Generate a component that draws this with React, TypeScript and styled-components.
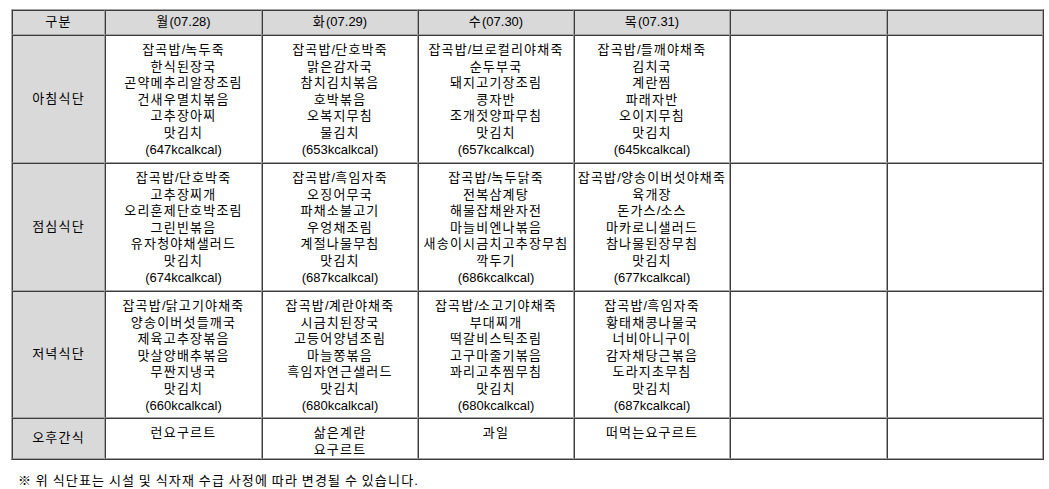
import React from "react";
import styled, { createGlobalStyle } from "styled-components";

const days = ["월(07.28)", "화(07.29)", "수(07.30)", "목(07.31)", "", ""];

const meals: { label: string; height: number; menus: string[][] }[] = [
  {
    label: "아침식단",
    height: 128,
    menus: [
      ["잡곡밥/녹두죽", "한식된장국", "곤약메추리알장조림", "건새우멸치볶음", "고추장아찌", "맛김치", "(647kcalkcal)"],
      ["잡곡밥/단호박죽", "맑은감자국", "참치김치볶음", "호박볶음", "오복지무침", "물김치", "(653kcalkcal)"],
      ["잡곡밥/브로컬리야채죽", "순두부국", "돼지고기장조림", "콩자반", "조개젓양파무침", "맛김치", "(657kcalkcal)"],
      ["잡곡밥/들깨야채죽", "김치국", "계란찜", "파래자반", "오이지무침", "맛김치", "(645kcalkcal)"],
      [],
      [],
    ],
  },
  {
    label: "점심식단",
    height: 128,
    menus: [
      ["잡곡밥/단호박죽", "고추장찌개", "오리훈제단호박조림", "그린빈볶음", "유자청야채샐러드", "맛김치", "(674kcalkcal)"],
      ["잡곡밥/흑임자죽", "오징어무국", "파채소불고기", "우엉채조림", "계절나물무침", "맛김치", "(687kcalkcal)"],
      ["잡곡밥/녹두닭죽", "전복삼계탕", "해물잡채완자전", "마늘비엔나볶음", "새송이시금치고추장무침", "깍두기", "(686kcalkcal)"],
      ["잡곡밥/양송이버섯야채죽", "육개장", "돈가스/소스", "마카로니샐러드", "참나물된장무침", "맛김치", "(677kcalkcal)"],
      [],
      [],
    ],
  },
  {
    label: "저녁식단",
    height: 127,
    menus: [
      ["잡곡밥/닭고기야채죽", "양송이버섯들깨국", "제육고추장볶음", "맛살양배추볶음", "무짠지냉국", "맛김치", "(660kcalkcal)"],
      ["잡곡밥/계란야채죽", "시금치된장국", "고등어양념조림", "마늘쫑볶음", "흑임자연근샐러드", "맛김치", "(680kcalkcal)"],
      ["잡곡밥/소고기야채죽", "부대찌개", "떡갈비스틱조림", "고구마줄기볶음", "꽈리고추찜무침", "맛김치", "(680kcalkcal)"],
      ["잡곡밥/흑임자죽", "황태채콩나물국", "너비아니구이", "감자채당근볶음", "도라지초무침", "맛김치", "(687kcalkcal)"],
      [],
      [],
    ],
  },
  {
    label: "오후간식",
    height: 40,
    menus: [["런요구르트"], ["삶은계란", "요구르트"], ["과일"], ["떠먹는요구르트"], [], []],
  },
];

const colWidths = [93, 157, 156, 156, 156, 157, 156];

// hangul runs get a little extra tracking, like the old bitmap font
function Txt({ children }: { children: string }) {
  const parts = children.split(/([가-힣※]+)/).filter((p) => p !== "");
  return (
    <>
      {parts.map((p, i) =>
        /[가-힣※]/.test(p) ? <Hangul key={i}>{p}</Hangul> : <React.Fragment key={i}>{p}</React.Fragment>
      )}
    </>
  );
}

function App() {
  return (
    <Page>
      <GlobalStyle />
      <MenuTable>
        <colgroup>
          {colWidths.map((w, i) => (
            <col key={i} style={{ width: w }} />
          ))}
        </colgroup>
        <thead>
          <Row $h={25}>
            <HeadCell>
              <Txt>구분</Txt>
            </HeadCell>
            {days.map((d, i) => (
              <HeadCell key={i}>
                <Txt>{d}</Txt>
              </HeadCell>
            ))}
          </Row>
        </thead>
        <tbody>
          {meals.map((m) => (
            <Row key={m.label} $h={m.height}>
              <LabelCell>
                <Txt>{m.label}</Txt>
              </LabelCell>
              {m.menus.map((items, i) => (
                <MenuCell key={i}>
                  {items.map((it, j) => (
                    <Line key={j}>
                      <Txt>{it}</Txt>
                    </Line>
                  ))}
                </MenuCell>
              ))}
            </Row>
          ))}
        </tbody>
      </MenuTable>
      <Note>
        <Txt>※ 위 식단표는 시설 및 식자재 수급 사정에 따라 변경될 수 있습니다.</Txt>
      </Note>
    </Page>
  );
}

export default App;

const GlobalStyle = createGlobalStyle`
  body {
    margin: 0;
    background: #ffffff;
    font-family: "Liberation Sans", "Noto Sans CJK KR", sans-serif;
    font-size: 13px;
    color: #000;
  }
`;

const Page = styled.div`
  padding: 9px 0 0 11px;
  width: 1049px;
  box-sizing: border-box;
`;

const MenuTable = styled.table`
  table-layout: fixed;
  border-collapse: separate;
  border-spacing: 0;
  width: 1033px;
  border: 1px solid;
  border-color: #a4a4a4 #3c3c3c #3c3c3c #a4a4a4;
`;

const Row = styled.tr<{ $h: number }>`
  height: ${(p) => p.$h}px;
`;

const Cell = styled.td`
  box-sizing: border-box;
  border: 1px solid;
  border-color: #3c3c3c #a4a4a4 #a4a4a4 #3c3c3c;
  text-align: center;
  line-height: 16.6px;
  padding: 0 2px;
`;

const HeadCell = styled(Cell).attrs({ as: "th" })`
  background: #d9d9d9;
  font-weight: normal;
  vertical-align: middle;
`;

const LabelCell = styled(Cell)`
  background: #d9d9d9;
  vertical-align: middle;
`;

const MenuCell = styled(Cell)`
  vertical-align: top;
  padding-top: 6px;
  white-space: nowrap;
`;

const Line = styled.div`
  line-height: 16.6px;
`;

const Hangul = styled.span`
  letter-spacing: 1.2px;
`;

const Note = styled.div`
  margin: 12px 0 0 7px;
  line-height: 17px;
`;
